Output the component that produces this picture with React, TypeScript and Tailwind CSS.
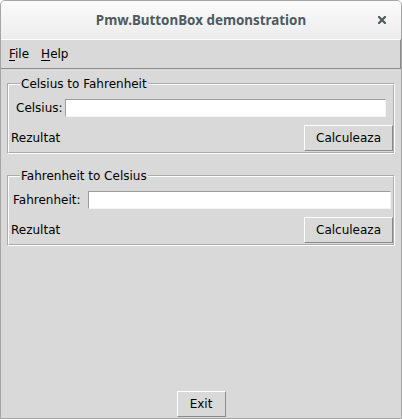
import React from "react";

function TkButton({ label, className = "" }: { label: string; className?: string }) {
  return (
    <button
      type="button"
      className={
        "h-[26px] flex items-center justify-center bg-[#d9d9d9] border border-t-white border-l-white border-b-[#8a8a8a] border-r-[#8a8a8a] text-black " +
        className
      }
    >
      {label}
    </button>
  );
}

function Converter({
  title,
  label,
  rowClass,
}: {
  title: string;
  label: string;
  rowClass: string;
}) {
  return (
    <fieldset className="mx-[6px] border-2 [border-style:groove] border-white px-0 pt-0 pb-[1px]">
      <legend className="ml-[11px] px-[1px] leading-[14px]">{title}</legend>
      <div className={"flex items-center h-[18px] mt-[8px] " + rowClass}>
        <span className="leading-[14px]">{label}</span>
        <input
          type="text"
          className="flex-1 h-[18px] bg-white border border-t-[#9c9c9c] border-l-[#9c9c9c] border-b-[#f4f4f4] border-r-[#f4f4f4] outline-none"
        />
      </div>
      <div className="flex items-center justify-between mt-[8px] pl-[2px]">
        <span>Rezultat</span>
        <TkButton label="Calculeaza" className="w-[89px]" />
      </div>
    </fieldset>
  );
}

export default function App() {
  return (
    <div className="w-[402px] h-[419px] bg-[#d9d9d9] border border-[#a5a5a5] rounded-t-[5px] overflow-hidden flex flex-col font-['DejaVu_Sans',sans-serif] text-[12px] text-black">
      {/* window title bar */}
      <div className="h-[38px] shrink-0 bg-gradient-to-b from-[#fbfbfb] to-[#ececec] grid grid-cols-[1fr_auto_1fr] items-center">
        <div />
        <span className="font-['Noto_Sans',sans-serif] font-bold text-[13.4px] text-[#4e5a60]">
          Pmw.ButtonBox demonstration
        </span>
        <div className="flex justify-end pr-[15px]">
          <svg width="8" height="8" viewBox="0 0 8 8">
            <path d="M1 1 L7 7 M7 1 L1 7" stroke="#4e5a60" strokeWidth="2.2" strokeLinecap="square" />
          </svg>
        </div>
      </div>

      {/* menu bar */}
      <div className="h-[30px] shrink-0 flex items-center gap-[12px] pl-[8px] border-t border-t-white border-b border-b-[#8c8c8c] border-r border-r-[#8c8c8c]">
        <span>
          <span className="underline underline-offset-2">F</span>ile
        </span>
        <span>
          <span className="underline underline-offset-2">H</span>elp
        </span>
      </div>

      <div className="flex-1 flex flex-col pt-[8px]">
        <Converter title="Celsius to Fahrenheit" label="Celsius:" rowClass="pl-[7px] pr-[7px] gap-[2px]" />
        <div className="h-[15px]" />
        <Converter title="Fahrenheit to Celsius" label="Fahrenheit:" rowClass="pl-[4px] pr-[2px] gap-[7px]" />
        <div className="mt-auto mb-[1px] flex justify-center">
          <TkButton label="Exit" className="w-[49px]" />
        </div>
      </div>
    </div>
  );
}
